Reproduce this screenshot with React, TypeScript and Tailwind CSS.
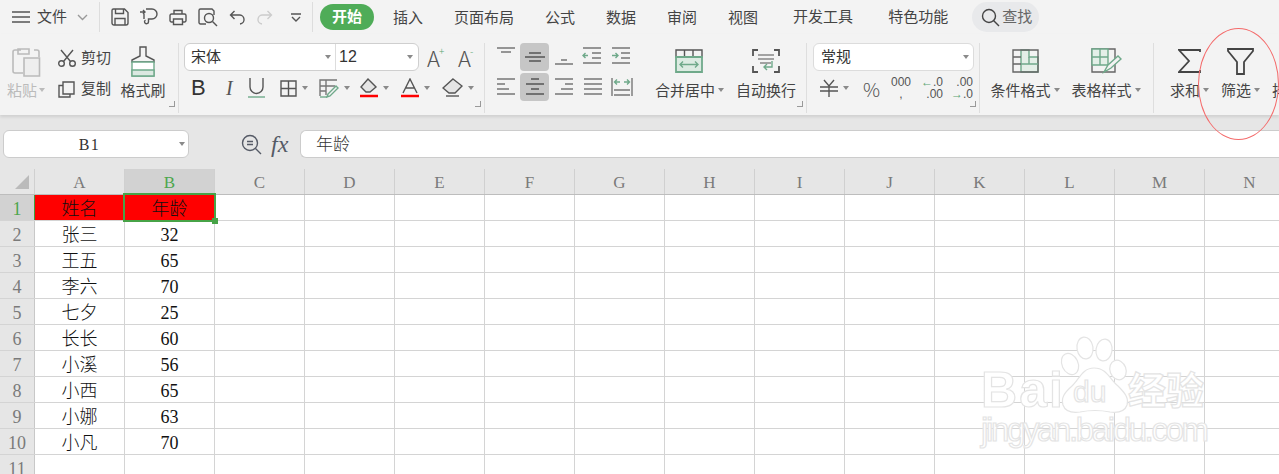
import React from "react";

const Caret = ({ className = "" }: { className?: string }) => (
  <span className={"inline-block w-0 h-0 border-x-[3.5px] border-x-transparent border-t-[4px] border-t-[#8a8a8a] " + className} />
);

const Ico = ({ w, h, children, className = "" }: { w: number; h: number; children: React.ReactNode; className?: string }) => (
  <svg width={w} height={h} viewBox={`0 0 ${w} ${h}`} fill="none" stroke="#555" strokeWidth="1.4" className={"shrink-0 block " + className}>
    {children}
  </svg>
);

const G = "#6fa98a";

const Corner = () => (
  <span className="absolute right-[3px] bottom-[6px] w-[6px] h-[6px] border-r border-b border-[#999]" />
);

const Large = ({ label, caret, icon, className = "" }: { label: string; caret?: boolean; icon: React.ReactNode; className?: string }) => (
  <div className={"flex flex-col items-center shrink-0 " + className}>
    <div className="h-[36px] flex items-center justify-center">{icon}</div>
    <div className="h-[22px] flex items-center text-[15px] leading-none text-[#444] whitespace-nowrap">
      {label}
      {caret && <Caret className="ml-[3px]" />}
    </div>
  </div>
);

const Tab = ({ children }: { children: React.ReactNode }) => (
  <span className="text-[15px] text-[#444] whitespace-nowrap leading-none">{children}</span>
);

const TopBar = () => (
  <div className="h-[34px] flex items-center">
    <Ico w={18} h={12} className="ml-[12px]"><path d="M0 1h18M0 6h18M0 11h18" /></Ico>
    <span className="ml-[7px] text-[15px] text-[#444]">文件</span>
    <Ico w={11} h={7} className="ml-[10px]"><path d="M1 1l4.5 4.5L10 1" stroke="#999" /></Ico>
    <span className="ml-[11px] w-px h-[30px] bg-[#ddd]" />
    <Ico w={18} h={18} className="ml-[11px]">
      <path d="M2.5 1h11l3.5 3.5V15a2 2 0 0 1-2 2H3a2 2 0 0 1-2-2V2.500A1.500 1.500 0 0 1 2.500 1zM4.500 1v4.500h8V1M4 17v-6.500h10V17" />
    </Ico>
    <Ico w={18} h={18} className="ml-[11px]">
      <path d="M0 4h5M3 2l2 2-2 2M6 1h6a5 5 0 0 1 0 10H8.500v3M8.500 11v2.500a2 2 0 1 1-3-1.500M4 6v5" />
    </Ico>
    <Ico w={18} h={18} className="ml-[11px]">
      <path d="M5 6V2.500h8V6M4 14H2.500A1.500 1.500 0 0 1 1 12.500V7.500A1.500 1.500 0 0 1 2.500 6h13A1.500 1.500 0 0 1 17 7.500v5a1.500 1.500 0 0 1-1.500 1.500H14M4.500 11h9v5.500h-9z" />
    </Ico>
    <Ico w={20} h={19} className="ml-[11px]">
      <path d="M8 16H2.500A1.500 1.500 0 0 1 1 14.500V2.500A1.500 1.500 0 0 1 2.500 1H14l2 2v4" />
      <circle cx="11" cy="10" r="4.500" /><path d="M14.500 13.500L19 18" />
    </Ico>
    <Ico w={16} h={15} className="ml-[11px]"><path d="M5.500 1L1.500 5l4 4M1.500 5H10a4.500 4.500 0 0 1 1 9" /></Ico>
    <Ico w={16} h={15} className="ml-[12px]"><path d="M10.500 1l4 4-4 4M14.500 5H6a4.500 4.500 0 0 0-1 9" stroke="#ccc" /></Ico>
    <Ico w={10} h={9} className="ml-[18px]"><path d="M0 1h10M1 4l4 4 4-4" /></Ico>
    <span className="ml-[11px] w-px h-[30px] bg-[#ddd]" />
    <span className="ml-[7px] w-[54px] h-[26px] rounded-[13px] bg-[#4fac58] text-white text-[15px] font-bold flex items-center justify-center">开始</span>
    <div className="ml-[19px] flex items-center gap-[31px]">
      <Tab>插入</Tab>
      <Tab>页面布局</Tab>
      <Tab>公式</Tab>
      <Tab>数据</Tab>
      <Tab>审阅</Tab>
      <Tab>视图</Tab>
      <span className="ml-[4px]"><Tab>开发工具</Tab></span>
      <span className="ml-[4px]"><Tab>特色功能</Tab></span>
    </div>
    <div className="ml-[24px] w-[67px] h-[30px] rounded-[15px] bg-[#e8e9eb] flex items-center pl-[9px]">
      <Ico w={19} h={19}><circle cx="8" cy="8" r="6.500" stroke="#444" /><path d="M12.500 12.500L18 18" stroke="#444" /></Ico>
      <span className="ml-[2px] text-[15px] text-[#666] whitespace-nowrap">查找</span>
    </div>
  </div>
);

const ClipboardGroup = () => (
  <div className="relative w-[179px] shrink-0 border-r border-[#dedede] flex">
    <div className="w-[51px] ml-[7px] flex flex-col items-start">
      <div className="h-[36px] ml-[5px] flex items-center">
        <Ico w={29} h={31}>
          <path d="M9 4H3a2 2 0 0 0-2 2v19a2 2 0 0 0 2 2h8M6 3h11v5H6zM22 4h3a2 2 0 0 1 2 2v5" stroke="#bbb" strokeWidth="1.600" />
          <path d="M12 12h15.500v18H12z" fill="#eee" stroke="#bbb" strokeWidth="1.600" />
        </Ico>
      </div>
      <div className="h-[22px] flex items-center text-[15px] text-[#bbb] whitespace-nowrap leading-none">粘贴<Caret className="ml-[2px] border-t-[#bbb]" /></div>
    </div>
    <div className="flex flex-col w-[62px] pt-[1px]">
      <div className="h-[28px] flex items-center">
        <Ico w={18} h={18}><circle cx="3.500" cy="14.500" r="2.800" /><circle cx="14.500" cy="14.500" r="2.800" /><path d="M5.500 12.500L15 1M12.500 12.500L3 1" /></Ico>
        <span className="ml-[5px] text-[15px] text-[#444] whitespace-nowrap">剪切</span>
      </div>
      <div className="h-[28px] mt-[3px] flex items-center">
        <Ico w={17} h={17}><path d="M5 1h11v12h-11zM5 4.500H1V16h11v-3" /></Ico>
        <span className="ml-[6px] text-[15px] text-[#444] whitespace-nowrap">复制</span>
      </div>
    </div>
    <Large
      label="格式刷"
      className="w-[46px]"
      icon={
        <Ico w={24} h={31}>
          <path d="M9 1h6v9l8 4v2H1v-2l8-4z" />
          <path d="M1 16h22v14H1z" fill="#fff" stroke={G} />
          <path d="M1 24h22v6H1z" fill="#dbe8e1" stroke={G} />
        </Ico>
      }
    />
    <Corner />
  </div>
);

const Btn = ({ className = "", children, caret }: { className?: string; children: React.ReactNode; caret?: boolean }) => (
  <div className={"h-[24px] flex items-center shrink-0 " + className}>
    {children}
    {caret && <Caret className="ml-[5px]" />}
  </div>
);

const FontGroup = () => (
  <div className="relative w-[306px] shrink-0 border-r border-[#dedede] pl-[5px]">
    <div className="flex items-center h-[28px]">
      <div className="w-[235px] h-[28px] bg-white border border-[#cfcfcf] rounded-[6px] flex items-center">
        <div className="w-[151px] h-full border-r border-[#ddd] flex items-center pl-[6px] text-[15px] text-[#333]">
          宋体
          <Caret className="ml-auto mr-[4px]" />
        </div>
        <div className="flex-1 h-full flex items-center pl-[3px] text-[16px] text-[#333]">
          12
          <Caret className="ml-auto mr-[5px]" />
        </div>
      </div>
      <div className="ml-[8px] w-[20px] flex items-center text-[22px] leading-none font-light font-['Noto_Sans_CJK_SC'] text-[#555]">A<span className="text-[10px] text-[#5aa572] -mt-[12px] -ml-[1px]">+</span></div>
      <div className="ml-[11px] w-[20px] flex items-center text-[22px] leading-none font-light font-['Noto_Sans_CJK_SC'] text-[#555]">A<span className="text-[10px] text-[#5aa572] -mt-[12px] -ml-[1px]">-</span></div>
    </div>
    <div className="flex items-center mt-[5px] h-[24px]">
      <Btn className="ml-[7px] w-[14px] text-[22px] font-normal text-[#333] pb-[1px]">B</Btn>
      <Btn className="ml-[21px] w-[9px] text-[20px] italic font-['Liberation_Serif'] text-[#555]">I</Btn>
      <Btn className="ml-[13px]">
        <Ico w={17} h={20}><path d="M2 0v9a6.500 6.500 0 0 0 13 0V0" /><path d="M0 19h17" stroke={G} /></Ico>
      </Btn>
      <Btn className="ml-[15px]" caret>
        <Ico w={17} h={17}><path d="M1 1h15v15H1zM8.500 1v15M1 8.500h15" /></Ico>
      </Btn>
      <Btn className="ml-[11px]" caret>
        <Ico w={20} h={19}><path d="M1 17V1h17M1 7h15M1 12h6M7 1v15" stroke="#777" /><path d="M9 15l8-8 2 2-8 8-3 1z" stroke={G} /><path d="M1 18h7" stroke={G} /></Ico>
      </Btn>
      <Btn className="ml-[10px]" caret>
        <Ico w={18} h={20}><path d="M8 1l8 8-6 5H6L1 9z" fill="#e5e5e5" /><path d="M0 18h18" stroke="#f00" strokeWidth="2.500" /></Ico>
      </Btn>
      <Btn className="ml-[12px]" caret>
        <Ico w={18} h={20}><path d="M2 15L9 1l7 14M4.500 10h9" /><path d="M0 18h18" stroke="#f00" strokeWidth="2.500" /></Ico>
      </Btn>
      <Btn className="ml-[12px]" caret>
        <Ico w={21} h={20}><path d="M11 1l9 7-7 7H7L1 10z" fill="#e5e5e5" /><path d="M4 18h13" /></Ico>
      </Btn>
    </div>
    <Corner />
  </div>
);

const L = "#777";
const alignIcons: React.ReactNode[] = [
  <path key="1" d="M2 2h18M6 6h10" stroke={L} />,
  <path key="2" d="M5 7h12M1 11h20M5 15h12" stroke="#555" />,
  <path key="3" d="M8 14h6M2 18h18" stroke={L} />,
  <g key="4"><path d="M1 2h18M10 7h9M10 12h9M1 17h18" stroke={L} /><path d="M6 9.500H1M3.500 7L1 9.500 3.500 12" stroke={G} /></g>,
  <g key="5"><path d="M1 2h18M10 7h9M10 12h9M1 17h18" stroke={L} /><path d="M1 9.500h6M4.500 7L7 9.500 4.500 12" stroke={G} /></g>,
  <path key="6" d="M2 3h18M2 8h8M2 13h12M2 18h18" stroke={L} />,
  <path key="7" d="M7 3h8M2 8h18M7 13h8M2 18h18" stroke="#555" strokeWidth="1.600" />,
  <path key="8" d="M2 3h18M12 8h8M8 13h12M2 18h18" stroke={L} />,
  <path key="9" d="M2 3h18M2 8h18M2 13h18M2 18h18" stroke={L} />,
  <g key="10"><path d="M1 2v18M21 2v18M3 14h16M3 19h16" stroke={L} /><path d="M4 6h5M6 3.500L3.500 6 6 8.500M13 6h5M16 3.500L18.500 6 16 8.500" stroke={G} /></g>,
];

const AlignGroup = () => (
  <div className="relative w-[322px] shrink-0 border-r border-[#dedede] flex">
    <div className="ml-[6px] grid grid-cols-[repeat(5,29px)] grid-rows-[28px_28px] gap-y-[2px] h-[58px] shrink-0">
      {alignIcons.map((ic, i) => (
        <div key={i} className={"flex items-center justify-center rounded-[4px] " + (i === 1 || i === 6 ? "bg-[#c6c6c6]" : "")}>
          <Ico w={22} h={22}>{ic}</Ico>
        </div>
      ))}
    </div>
    <Large
      label="合并居中"
      caret
      className="ml-[19px] w-[70px] items-start"
      icon={
        <Ico w={28} h={24} className="ml-[20px]">
          <path d="M1 1h26v7H1zM9.500 1v7M18 1v7" stroke="#555" />
          <path d="M1 8h26v15H1z" fill="#dcebe2" stroke={G} strokeWidth="1.800" />
          <path d="M5 15.500h18M8 12.500l-3 3 3 3M20 12.500l3 3-3 3" stroke={G} />
        </Ico>
      }
    />
    <Large
      label="自动换行"
      className="ml-[11px] w-[60px]"
      icon={
        <Ico w={28} h={24}>
          <path d="M6 1H1v6M22 1h5v6M1 17v6h5M27 17v6h-5" stroke="#555" strokeWidth="1.800" />
          <path d="M6 6h16M6 10h16M8 14h11" stroke="#888" />
          <path d="M20 12v6h-8M15 15l-3 3 3 3" stroke={G} />
        </Ico>
      }
    />
    <Corner />
  </div>
);

const NumberGroup = () => (
  <div className="relative w-[173px] shrink-0 border-r border-[#dedede] pl-[6px]">
    <div className="w-[161px] h-[28px] bg-white border border-[#dcdcdc] rounded-[6px] flex items-center pl-[7px] text-[15px] text-[#333]">
      常规
      <Caret className="ml-auto mr-[4px]" />
    </div>
    <div className="mt-[5px] h-[24px] flex items-center text-[#555]">
      <Btn className="ml-[7px]" caret>
        <Ico w={18} h={18}><path d="M4 1l5 6 5-6M0 8h18M0 12h18M9 7v11" /></Ico>
      </Btn>
      <span className="ml-[14px] w-[17px] text-[19px] leading-none font-light font-['Noto_Sans_CJK_SC']">%</span>
      <span className="ml-[10px] w-[22px] text-[12px] leading-[12px] text-center">000<br />,</span>
      <span className="ml-[9px] w-[22px] text-[12px] leading-[12px] text-right"><span className="text-[#5aa572]">←</span>.0<br />.00</span>
      <span className="ml-[8px] w-[22px] text-[12px] leading-[12px] text-right">.00<br /><span className="text-[#5aa572]">→</span>.0</span>
    </div>
    <Corner />
  </div>
);

const StylesGroup = () => (
  <div className="w-[174px] shrink-0 border-r border-[#dedede] flex">
    <Large
      label="条件格式"
      caret
      className="ml-[10px] w-[70px]"
      icon={
        <Ico w={27} h={24}>
          <path d="M9 1h8v7h9v15H9z" stroke={G} fill="#e4efe8" />
          <path d="M1 1h25v22H1zM1 8h8M1 15h8" stroke="#666" />
          <path d="M17 15h9M17 8v7M9 15h8" stroke={G} />
        </Ico>
      }
    />
    <Large
      label="表格样式"
      caret
      className="ml-[11px] w-[70px]"
      icon={
        <Ico w={31} h={26}>
          <path d="M1 1h23v23H1z" stroke="#666" />
          <path d="M1 1h16v16H1zM1 9h16M9 1v16" stroke={G} fill="#e4efe8" />
          <path d="M13 24l4-7 10-9 3 3-10 9z" stroke={G} fill="#f3f3f3" />
        </Ico>
      }
    />
  </div>
);

const EditGroup = () => (
  <div className="flex shrink-0">
    <Large
      label="求和"
      caret
      className="ml-[16px] w-[39px] items-start"
      icon={
        <Ico w={23} h={25} className="ml-[8px]"><path d="M22 3V1H1l10 11L1 23h21v-2" strokeWidth="1.800" stroke="#444" /></Ico>
      }
    />
    <Large
      label="筛选"
      caret
      className="ml-[12px] w-[39px] items-start"
      icon={
        <Ico w={27} h={27} className="ml-[6px]"><path d="M1 1h25v2l-9 11v12h-7V14L1 3z" strokeWidth="1.800" stroke="#444" /></Ico>
      }
    />
    <Large label="排序" className="ml-[12px] w-[30px] items-start" icon={<span />} />
  </div>
);

const Ribbon = () => (
  <div className="h-[81px] bg-[#f3f3f3] flex pt-[9px] pb-[2px] shadow-[0_2px_3px_rgba(0,0,0,0.1)] relative overflow-hidden">
    <ClipboardGroup />
    <FontGroup />
    <AlignGroup />
    <NumberGroup />
    <StylesGroup />
    <EditGroup />
  </div>
);

const FormulaBar = () => (
  <div className="h-[54px] bg-[#e6e6e6] pt-[15px] flex items-start">
    <div className="ml-[3px] w-[186px] h-[28px] bg-white border border-[#ccc] rounded-[6px] flex items-center">
      <span className="flex-1 text-center pr-[4px] pt-[1px] text-[16px] font-['Liberation_Serif'] tracking-[1.500px] text-[#333]">B1</span>
      <Caret className="mr-[3px]" />
    </div>
    <div className="ml-[52px] mt-[4px]">
      <Ico w={21} h={21}>
        <circle cx="9" cy="9" r="7.500" stroke="#555a66" /><path d="M14.500 14.500L20 20M6 7.500h6M6 10.500h6" stroke="#555a66" />
      </Ico>
    </div>
    <span className="ml-[9px] -mt-[1px] w-[20px] text-[24px] leading-[30px] italic font-['Liberation_Serif'] text-[#555a66] whitespace-nowrap">fx</span>
    <div className="ml-[9px] flex-1 h-[28px] bg-white border border-[#ccc] border-r-0 rounded-l-[6px] flex items-center pl-[15px] pt-[1px] text-[17px] font-light text-[#333]">
      年龄
    </div>
  </div>
);

const COLS = ["A", "B", "C", "D", "E", "F", "G", "H", "I", "J", "K", "L", "M", "N"];
const DATA: [string, string][] = [
  ["姓名", "年龄"],
  ["张三", "32"],
  ["王五", "65"],
  ["李六", "70"],
  ["七夕", "25"],
  ["长长", "60"],
  ["小溪", "56"],
  ["小西", "65"],
  ["小娜", "63"],
  ["小凡", "70"],
  ["", ""],
];

const Sheet = () => (
  <div className="h-[305px] overflow-hidden bg-white relative">
    <div className="flex h-[26px] bg-[#e6e6e6] border-b border-[#bdbdbd]">
      <div className="w-[35px] shrink-0 border-r border-[#d0d0d0] flex items-end justify-end pr-[5px] pb-[5px]">
        <span className="w-0 h-0 border-l-[14px] border-l-transparent border-b-[14px] border-b-[#bbb]" />
      </div>
      {COLS.map((c) => (
        <div
          key={c}
          className={
            "w-[90px] shrink-0 border-r border-[#d0d0d0] flex items-center justify-center pt-[3px] text-[17px] font-['Liberation_Serif'] " +
            (c === "B" ? "bg-[#d2d2d2] text-[#4da64d]" : "text-[#7a7a7a]")
          }
        >
          {c}
        </div>
      ))}
    </div>
    {DATA.map((r, i) => (
      <div key={i} className="flex h-[26px] border-b border-[#d4d4d4] text-[18px] leading-none text-[#111]">
        <div
          className={
            "w-[35px] shrink-0 border-r flex items-center justify-center pt-[2px] text-[18px] font-['Liberation_Serif'] " +
            (i === 0 ? "bg-[#d2d2d2] text-[#4da64d] border-[#3f9f3f]" : "bg-[#e6e6e6] text-[#7a7a7a] border-[#c8c8c8]")
          }
        >
          {i + 1}
        </div>
        {COLS.map((c, j) => (
          <div
            key={c}
            className={
              "relative w-[90px] shrink-0 border-r border-[#d4d4d4] flex items-center justify-center pt-[2px] font-light " +
              (i === 0 && j < 2 ? "bg-[#ff0000] " : "") +
              (i === 0 && j === 1 ? "z-10 " : "") +
              (j === 1 ? "font-['Liberation_Serif','Noto_Sans_CJK_SC',serif] " : "")
            }
          >
            {j < 2 ? r[j] : ""}
            {i === 0 && j === 1 && (
              <>
                <span className="absolute left-[-2px] top-[-2px] w-[93px] h-[29px] border-2 border-[#47a347]" />
                <span className="absolute left-[87px] top-[23px] w-[6px] h-[6px] bg-[#47a347]" />
              </>
            )}
          </div>
        ))}
      </div>
    ))}
  </div>
);

const Watermark = () => (
  <svg width="240" height="130" viewBox="0 0 240 130" className="absolute left-[975px] top-[330px] z-20 pointer-events-none" fill="#fff" stroke="#e4e4e4" strokeWidth="1.200">
    <ellipse cx="110" cy="18" rx="8" ry="11" transform="rotate(-8 110 18)" />
    <ellipse cx="129" cy="20" rx="8" ry="11" transform="rotate(8 129 20)" />
    <ellipse cx="95" cy="34" rx="8" ry="11" transform="rotate(-25 95 34)" />
    <ellipse cx="143" cy="40" rx="8" ry="10" transform="rotate(-20 143 40)" />
    <path d="M119 38c-12 0-15 12-22 18-8 7-11 12-9 19 2 6 9 8 17 7 10-2 20-2 30 0 8 1 15-1 17-7 2-7-2-12-9-19-8-6-11-18-24-18z" />
    <text x="6" y="77" fontFamily="Liberation Sans" fontSize="50" fontWeight="700" textLength="82">Bai</text>
    <text x="98" y="72" fontFamily="Liberation Sans" fontSize="30" fontWeight="400" fill="#fff">du</text>
    <text x="153" y="74" fontFamily="Noto Sans CJK SC" fontSize="38" fontWeight="700" textLength="76">经验</text>
    <text x="6" y="111" fontFamily="Liberation Sans" fontSize="33" textLength="228">jingyan.baidu.com</text>
  </svg>
);

export default function App() {
  return (
    <div className="relative w-[1279px] h-[474px] overflow-hidden bg-[#f3f3f3] font-['Liberation_Sans','Noto_Sans_CJK_SC',sans-serif]">
      <TopBar />
      <Ribbon />
      <FormulaBar />
      <Sheet />
      <Watermark />
      <div className="absolute left-[1198px] top-[28px] w-[81px] h-[112px] rounded-[50%] border border-[#f46a6a]" />
    </div>
  );
}
